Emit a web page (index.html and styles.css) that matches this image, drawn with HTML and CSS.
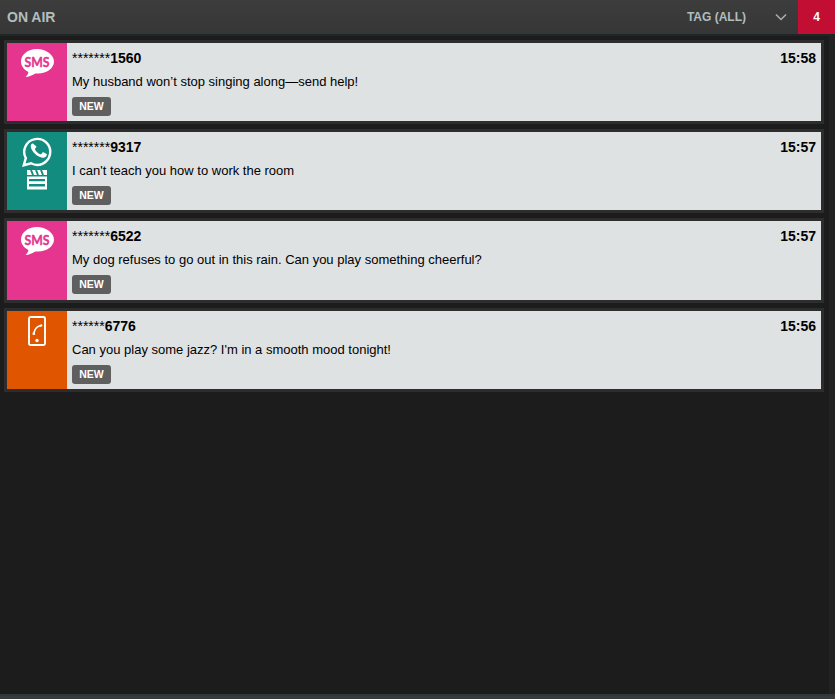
FILE: index.html
```html
<!DOCTYPE html>
<html>
<head>
<meta charset="utf-8">
	<title>On Air</title>
	<link rel="stylesheet" href="styles.css">
</head>
<body>

<div class="app">
	<div class="header">
		<div class="title">ON AIR</div>
		<div class="tag-filter">
			<span>TAG (ALL)</span>
			<svg class="chevron" width="12" height="8" viewBox="0 0 12 8"><path d="M1 1.500l5 5 5-5" fill="none" stroke="#a9b0ae" stroke-width="1.500"/></svg>
		</div>
		<div class="count">4</div>
	</div>

	<div class="content">
		<div class="list">
			<div class="card">
				<div class="source sms">
					<svg class="icon-sms" width="34" height="30" viewBox="0 0 34 30"><path d="M17 1C8 1 1 6.500 1 13.500c0 4.500 3 8.300 7.400 10.500-.3 2-1.300 3.800-2.900 5 3.500-.3 7.200-1.800 9.800-3.600.9.100 1.800.1 2.700.1 9 0 16-5.500 16-12S26 1 17 1z" fill="#fff"/><text x="17" y="18.500" text-anchor="middle" textLength="25" lengthAdjust="spacingAndGlyphs" class="sms-text">SMS</text></svg>
				</div>
				<div class="body">
					<div class="top"><div class="caller">*******<b>1560</b></div><div class="time">15:58</div></div>
					<div class="msg">My husband won’t stop singing along—send help!</div>
					<span class="badge">NEW</span>
				</div>
			</div>
			<div class="card">
				<div class="source whatsapp">
					<svg class="icon-wa" width="30" height="30" viewBox="0 0 30 30"><path d="M1.800 28.200l2-7.100A13 13 0 1 1 9 26.300z" fill="none" stroke="#fff" stroke-width="2.400"/><path d="M10.800 8.200c-.6 0-1.800 1-1.800 3 0 2.200 1.500 4.300 1.800 4.700.3.400 3 4.700 7.300 6.300 3.400 1.300 4.200 1 4.900.9.800-.1 2.300-1 2.600-1.900.3-.9.300-1.700.2-1.900l-3.400-1.900c-.4-.1-.7-.2-1 .2l-1.400 1.800c-.3.300-.5.300-1 .1-2.500-1.200-4.300-2.800-5.500-5.100-.2-.4 0-.6.200-.8l1.100-1.500c.2-.3.100-.6 0-.9L11.900 8.700c-.2-.5-.6-.5-1.100-.5z" fill="#fff" transform="translate(.2 -1.300) scale(.95)"/></svg>
					<svg class="icon-clap" width="22" height="21" viewBox="0 0 22 21"><path d="M1 1h20v5H1z" fill="#fff"/><path d="M5 1l2 5M10 1l2 5M15 1l2 5" stroke="#128c7e" stroke-width="2"/><path d="M1 7.500h20V20.500H1zM3 10v2.200h16V10zM3 15v2.500h16V15z" fill="#fff" fill-rule="evenodd"/></svg>
				</div>
				<div class="body">
					<div class="top"><div class="caller">*******<b>9317</b></div><div class="time">15:57</div></div>
					<div class="msg">I can't teach you how to work the room</div>
					<span class="badge">NEW</span>
				</div>
			</div>
			<div class="card card-tall">
				<div class="source sms">
					<svg class="icon-sms" width="34" height="30" viewBox="0 0 34 30"><path d="M17 1C8 1 1 6.500 1 13.500c0 4.500 3 8.300 7.400 10.500-.3 2-1.300 3.800-2.900 5 3.500-.3 7.200-1.800 9.800-3.600.9.100 1.800.1 2.700.1 9 0 16-5.500 16-12S26 1 17 1z" fill="#fff"/><text x="17" y="18.500" text-anchor="middle" textLength="25" lengthAdjust="spacingAndGlyphs" class="sms-text">SMS</text></svg>
				</div>
				<div class="body">
					<div class="top"><div class="caller">*******<b>6522</b></div><div class="time">15:57</div></div>
					<div class="msg">My dog refuses to go out in this rain. Can you play something cheerful?</div>
					<span class="badge">NEW</span>
				</div>
			</div>
			<div class="card">
				<div class="source phone">
					<svg class="icon-phone" width="18" height="30" viewBox="0 0 18 30"><rect x="1" y="1" width="16" height="28" rx="1.500" fill="none" stroke="#fff" stroke-width="1.900"/><path d="M12.500 9.500c-3.200 1-6 4-6.500 7.500" fill="none" stroke="#fff" stroke-width="1.600"/><path d="M11.500 9.300l2.200-1.200.9 2-2.200 1zM4.600 16.500l2.400-.2.100 2.400-2.400.2z" fill="#fff"/><circle cx="9" cy="24.500" r="1.700" fill="#fff"/></svg>
				</div>
				<div class="body">
					<div class="top"><div class="caller">******<b>6776</b></div><div class="time">15:56</div></div>
					<div class="msg">Can you play some jazz? I'm in a smooth mood tonight!</div>
					<span class="badge">NEW</span>
				</div>
			</div>
		</div>
		<div class="scroll-track"></div>
	</div>

	<div class="footer"></div>
</div>

</body>
</html>
```

FILE: styles.css
```css
html, body{
	margin: 0;
	height: 100%;
}
body{
	background: #1c1c1c;
	font-family: "Liberation Sans", Arial, sans-serif;
	overflow: hidden;
}
.app{
	height: 699px;
	display: flex;
	flex-direction: column;
}

.header{
	height: 34px;
	flex: none;
	display: flex;
	align-items: center;
	background: linear-gradient(#3d3d3d, #363636);
	border-bottom: 2px solid #1f2628;
	color: #b2bdbd;
	font-weight: bold;
}
.title{
	flex: 1;
	padding-left: 7px;
	font-size: 14px;
}
.tag-filter{
	display: flex;
	align-items: center;
	font-size: 12px;
}
.chevron{
	margin: 0 11px 0 29px;
	display: block;
}
.count{
	width: 37px;
	height: 34px;
	line-height: 34px;
	text-align: center;
	background: #c20e32;
	color: #fff;
	font-size: 12px;
}

.content{
	flex: 1;
	display: flex;
	min-height: 0;
}
.list{
	flex: 1;
	padding: 4px 5px 0 4px;
}
.scroll-track{
	width: 6px;
	background: #222;
}

.card{
	display: flex;
	height: 78px;
	border: 3px solid #2d2d2d;
	margin-bottom: 5px;
}
.card-tall{
	height: 79px;
}
.source{
	width: 60px;
	flex: none;
	display: flex;
	flex-direction: column;
	align-items: center;
	padding-top: 5px;
	box-sizing: border-box;
}
.sms{
	background: #e6358e;
}
.whatsapp{
	background: #128c7e;
}
.phone{
	background: #e05500;
}
.icon-clap{
	margin-top: 2px;
}
.sms-text{
	font-family: Lato, "Liberation Sans", sans-serif;
	font-size: 14px;
	font-weight: bold;
	fill: #e6358e;
	stroke: #e6358e;
	stroke-width: .4px;
}

.body{
	flex: 1;
	background: #dfe2e3;
	padding: 7px 5px 0;
	color: #000;
}
.top{
	display: flex;
	justify-content: space-between;
	font-size: 14px;
	line-height: 16px;
}
.caller b, .time{
	font-weight: bold;
}
.msg{
	font-size: 13px;
	line-height: 16px;
	margin: 8px 0 6px;
}
.badge{
	display: inline-block;
	width: 39px;
	height: 19px;
	line-height: 19px;
	text-align: center;
	background: #5f5f5f;
	border-radius: 3px;
	color: #fff;
	font-size: 10.500px;
	font-weight: bold;
}

.footer{
	height: 5px;
	flex: none;
	background: #3a3a3a;
	border-top: 2px solid #2a3840;
	box-sizing: border-box;
}
```
